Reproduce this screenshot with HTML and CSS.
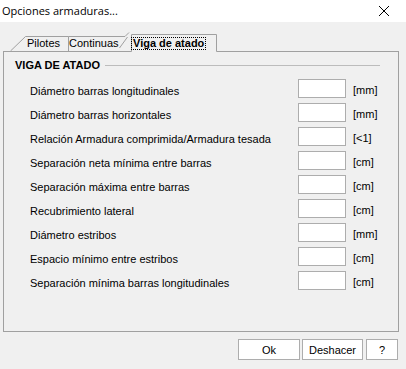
FILE: index.html
```html
<!DOCTYPE html>
<html>
<head>
<meta charset="utf-8">
<link rel="stylesheet" href="styles.css">
</head>
<body>
<div class="window">
  <div class="titlebar">
    <span class="title">Opciones armaduras...</span>
    <svg class="close" width="12" height="12" viewBox="0 0 12 12"><path d="M1 1 L11 11 M11 1 L1 11" stroke="#000" stroke-width="1" fill="none"/></svg>
  </div>
  <div class="tabstrip">
    <svg class="tabshapes" width="406" height="20" viewBox="0 0 406 20">
      <path d="M7.5 19 L22.5 4.5 H65.5 V19" stroke="#a0a0a0" fill="none"/>
      <path d="M65.5 4.5 H122 L126 0.5" stroke="#a0a0a0" fill="none"/>
      <path d="M116.5 16 L124.5 5" stroke="#a0a0a0" fill="none"/>
      <path d="M0 19.5 H128.5 V2.5 H213.5 V19.5 H396" stroke="#a0a0a0" fill="none"/>
    </svg>
    <span class="tab tab-pilotes">Pilotes</span>
    <span class="tab tab-continuas">Continuas</span>
    <span class="tab tab-active"><span class="focus">Viga de atado</span></span>
  </div>
  <div class="panel">
    <div class="group-head"><span class="group-title">VIGA DE ATADO</span><span class="group-line"></span></div>
    <div class="rows">
      <div class="row"><span class="label">Diámetro barras longitudinales</span><span class="input"></span><span class="unit">[mm]</span></div>
      <div class="row"><span class="label">Diámetro barras horizontales</span><span class="input"></span><span class="unit">[mm]</span></div>
      <div class="row"><span class="label">Relación Armadura comprimida/Armadura tesada</span><span class="input"></span><span class="unit">[&lt;1]</span></div>
      <div class="row"><span class="label">Separación neta mínima entre barras</span><span class="input"></span><span class="unit">[cm]</span></div>
      <div class="row"><span class="label">Separación máxima entre barras</span><span class="input"></span><span class="unit">[cm]</span></div>
      <div class="row"><span class="label">Recubrimiento lateral</span><span class="input"></span><span class="unit">[cm]</span></div>
      <div class="row"><span class="label">Diámetro estribos</span><span class="input"></span><span class="unit">[mm]</span></div>
      <div class="row"><span class="label">Espacio mínimo entre estribos</span><span class="input"></span><span class="unit">[cm]</span></div>
      <div class="row"><span class="label">Separación mínima barras longitudinales</span><span class="input"></span><span class="unit">[cm]</span></div>
    </div>
  </div>
  <div class="buttons">
    <button class="btn btn-ok">Ok</button>
    <button class="btn btn-undo">Deshacer</button>
    <button class="btn btn-help">?</button>
  </div>
</div>
</body>
</html>
```
FILE: styles.css
```css
html, body {
  margin: 0;
  padding: 0;
}
body {
  width: 406px;
  height: 369px;
  background: #f0f0f0;
  font-family: "Liberation Sans", Arial, sans-serif;
  font-size: 11px;
  color: #000;
  overflow: hidden;
}
.window {
  display: flex;
  flex-direction: column;
}
.titlebar {
  height: 22px;
  background: #fff;
  display: flex;
  align-items: center;
  justify-content: space-between;
  padding: 0 16px 0 2px;
}
.title {
  font-family: "Open Sans", "Noto Sans", sans-serif;
  font-size: 11px;
  color: #000;
  position: relative;
  top: -1px;
}
.close {
  display: block;
}
.tabstrip {
  position: relative;
  height: 20px;
  margin-top: 10px;
  margin-left: 3px;
  display: flex;
  align-items: flex-end;
}
.tabshapes {
  position: absolute;
  left: 0;
  top: 0;
}
.tab {
  height: 15px;
  line-height: 13px;
  position: relative;
}
.tab-pilotes {
  margin-left: 24px;
  width: 38px;
}
.tab-continuas {
  margin-left: 4px;
  width: 56px;
}
.tab-active {
  margin-left: 4px;
  height: 17px;
  font-weight: bold;
  padding: 2px 2px 0 2px;
  box-sizing: border-box;
}
.focus {
  display: inline-block;
  border: 1px dotted #000;
  padding: 0 1px;
  line-height: 11px;
}
.panel {
  margin: 0 7px 0 3px;
  height: 280px;
  border: 1px solid #a0a0a0;
  border-top: none;
  box-sizing: border-box;
  padding: 6px 0 0 0;
}
.group-head {
  display: flex;
  align-items: center;
  padding-left: 11px;
  padding-right: 18px;
  height: 14px;
}
.group-title {
  font-weight: bold;
}
.group-line {
  flex: 1;
  height: 1px;
  background: #bcbcbc;
  margin-left: 5px;
}
.rows {
  display: flex;
  flex-direction: column;
  gap: 5px;
  margin-top: 7px;
}
.row {
  display: flex;
  align-items: center;
  height: 19px;
}
.label {
  padding-left: 26px;
  width: 268px;
  padding-top: 4px;
}
.input {
  width: 48px;
  height: 19px;
  background: #fff;
  border: 1px solid #adadad;
  box-sizing: border-box;
  display: block;
}
.unit {
  margin-left: 7px;
  padding-top: 2px;
}
.buttons {
  display: flex;
  justify-content: flex-end;
  gap: 2px;
  margin-top: 7px;
  padding-right: 8px;
}
.btn {
  font-family: "Liberation Sans", Arial, sans-serif;
  font-size: 11px;
  height: 21px;
  background: #fff;
  border: 1px solid #adadad;
  padding: 0;
  color: #000;
}
.btn-ok { width: 62px; }
.btn-undo { width: 61px; }
.btn-help { width: 32px; margin-left: 1px; }
```
